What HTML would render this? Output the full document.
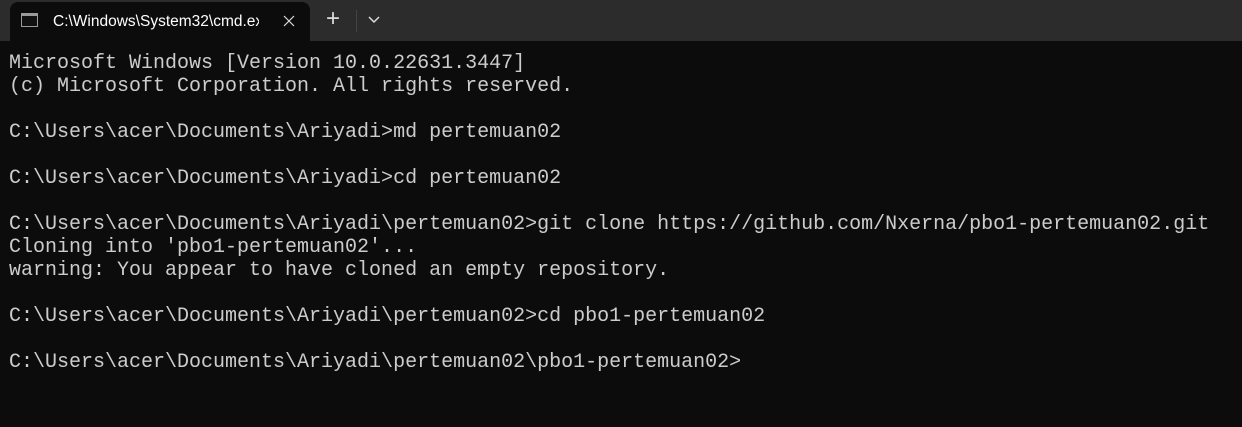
<!DOCTYPE html>
<html><head><style>
body{margin:0;width:1242px;height:427px;background:#0c0c0c;overflow:hidden;position:relative;font-family:"Liberation Sans",sans-serif}
.bar{position:absolute;left:0;top:0;width:1242px;height:41px;background:#2c2c2c}
.tab{position:absolute;left:10px;top:2px;width:300px;height:39px;background:#0c0c0c;border-radius:8px 8px 0 0}
.icon{position:absolute;left:11px;top:11px;width:17px;height:14px;background:#111;border:1px solid #9a9a9a;border-top:3px solid #9a9a9a;box-sizing:border-box}
.title{position:absolute;left:43px;top:11px;color:#fff;font-size:15.5px;white-space:nowrap;width:206px;overflow:hidden}
.plus{position:absolute;left:326px;top:5px;color:#ddd;font-size:24px}
.sep{position:absolute;left:356px;top:10px;width:1px;height:22px;background:#444}
pre{position:absolute;left:9px;top:52px;margin:0;font-family:"Liberation Mono",monospace;font-size:20px;line-height:23px;color:#cccccc}
</style></head><body>
<div class="bar"><div class="tab"><div class="icon"></div><div class="title">C:\Windows\System32\cmd.exe</div>
<svg style="position:absolute;left:273px;top:13px" width="12" height="12"><path d="M1 1L11 11M11 1L1 11" stroke="#ddd" stroke-width="1.2"/></svg></div>
<div class="plus">+</div><div class="sep"></div>
<svg style="position:absolute;left:368px;top:16px" width="12" height="8"><path d="M1 1L6 6L11 1" stroke="#ddd" fill="none" stroke-width="1.5"/></svg></div>
<pre>Microsoft Windows [Version 10.0.22631.3447]
(c) Microsoft Corporation. All rights reserved.

C:\Users\acer\Documents\Ariyadi>md pertemuan02

C:\Users\acer\Documents\Ariyadi>cd pertemuan02

C:\Users\acer\Documents\Ariyadi\pertemuan02>git clone https://github.com/Nxerna/pbo1-pertemuan02.git
Cloning into 'pbo1-pertemuan02'...
warning: You appear to have cloned an empty repository.

C:\Users\acer\Documents\Ariyadi\pertemuan02>cd pbo1-pertemuan02

C:\Users\acer\Documents\Ariyadi\pertemuan02\pbo1-pertemuan02></pre>
</body></html>
